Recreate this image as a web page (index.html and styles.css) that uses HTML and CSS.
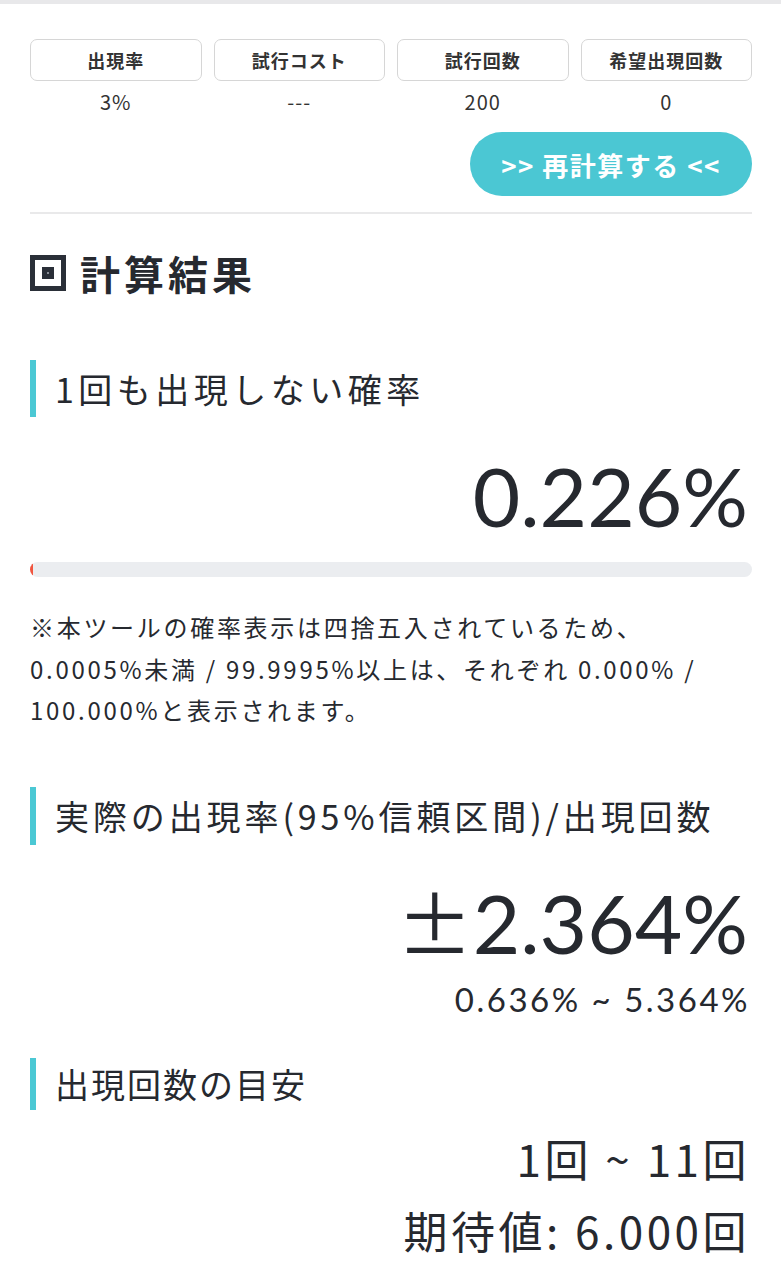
FILE: index.html
```html
<!DOCTYPE html>
<html lang="ja">
<head>
<meta charset="utf-8">
<link rel="stylesheet" href="styles.css">
</head>
<body>
<div class="topline"></div>
<main class="wrap">
  <div class="params">
    <div class="param"><div class="plabel">出現率</div><div class="pval">3%</div></div>
    <div class="param"><div class="plabel">試行コスト</div><div class="pval">---</div></div>
    <div class="param"><div class="plabel">試行回数</div><div class="pval">200</div></div>
    <div class="param"><div class="plabel">希望出現回数</div><div class="pval">0</div></div>
  </div>
  <div class="btnrow"><button class="recalc">&gt;&gt; 再計算する &lt;&lt;</button></div>
  <hr class="sep">
  <h2 class="title"><svg class="ticon" viewBox="0 0 36 36" width="36" height="36"><rect x="2.5" y="2.5" width="31" height="31" fill="none" stroke="#2a2f38" stroke-width="5"/><rect x="12" y="12" width="12" height="12" fill="#2a2f38"/><rect x="17" y="17" width="2" height="2" fill="#8a8f98"/></svg><span>計算結果</span></h2>

  <h3 class="sub s1">1回も出現しない確率</h3>
  <div class="big v1">0.226%</div>
  <div class="bar"><div class="fill" style="width:0.226%"></div></div>
  <p class="note">※本ツールの確率表示は四捨五入されているため、<br>0.0005%未満 / 99.9995%以上は、それぞれ 0.000% / <br>100.000%と表示されます。</p>

  <h3 class="sub s2">実際の出現率(95%信頼区間)/出現回数</h3>
  <div class="big v2"><span class="pm">±</span>2.364%</div>
  <div class="range">0.636% ~ 5.364%</div>

  <h3 class="sub s3">出現回数の目安</h3>
  <div class="mid m1">1回 ~ 11回</div>
  <div class="mid m2">期待値: 6.000回</div>
</main>
</body>
</html>
```
FILE: styles.css
```css
* { box-sizing: border-box; }
html, body { margin: 0; padding: 0; background: #fff; }
body {
  font-family: "Noto Sans CJK JP", "Noto Sans", sans-serif;
  color: #26292f;
  width: 781px;
}
.topline { height: 4px; background: #e8e8ea; }
.wrap { padding: 35px 29px 0 30px; }
.params {
  display: grid;
  grid-template-columns: repeat(4, 1fr);
  column-gap: 12px;
}
.param { display: flex; flex-direction: column; align-items: stretch; }
.plabel {
  height: 42px;
  border: 1.5px solid #d6d6d6;
  border-radius: 7px;
  display: flex; align-items: center; justify-content: center;
  font-size: 18px; font-weight: 700; color: #333;
  letter-spacing: 1px;
}
.pval {
  text-align: center;
  font-size: 20px; color: #333;
  height: 42px; line-height: 42px;
  letter-spacing: 1px;
}
.btnrow { display: flex; justify-content: flex-end; margin-top: 9px; }
.recalc {
  width: 282px; height: 64px;
  border: none; border-radius: 32px;
  background: #4bc7d3; color: #fff;
  font-family: inherit; font-size: 26px; font-weight: 700;
  letter-spacing: 1.5px;
}
.sep { border: none; height: 2px; background: #e9e9ea; margin: 16px 0 0 0; }
.title {
  display: flex; align-items: center; gap: 14px;
  margin: 37px 0 0 0;
  font-size: 40px; font-weight: 700; line-height: 44px;
  letter-spacing: 4px;
  color: #26292f;
}
.ticon { display: block; flex: none; }
.sub {
  margin: 0;
  border-left: 6px solid #4bc8d4;
  padding-left: 19px;
  font-weight: 400;
  font-size: 34px;
  line-height: 57px;
  color: #26292f;
}
.s1 { margin-top: 65px; letter-spacing: 4.5px; }
.big {
  text-align: right;
  font-family: Lato, "Noto Sans CJK JP", sans-serif;
  font-size: 82px;
  line-height: 100px;
  padding-right: 4px;
  font-weight: 400;
  letter-spacing: 0;
}
.pm {
  font-family: "Noto Sans CJK JP", sans-serif;
  font-size: 76px;
  line-height: 1;
  letter-spacing: 0;
}
.v1 { margin-top: 28px; margin-bottom: 4px; }
.bar {
  height: 15px; margin-top: 17px;
  background: #ebedf0; border-radius: 8px; overflow: hidden;
}
.fill { height: 100%; background: #f1553f; border-radius: 8px; min-width: 3px; }
.note {
  margin: 29px 0 0 0;
  font-size: 24px; line-height: 41.5px; color: #26292f;
  letter-spacing: 2.7px;
}
.s2 { margin-top: 56px; letter-spacing: 3.9px; line-height: 58px; }
.v2 { margin-top: 27px; }
.range {
  text-align: right;
  font-family: Lato, "Noto Sans CJK JP", sans-serif;
  font-size: 33px; line-height: 44px;
  padding-right: 2px; margin-top: 5px;
  letter-spacing: 2.5px;
}
.s3 { margin-top: 37px; line-height: 52px; letter-spacing: 2px; }
.mid {
  text-align: right; font-size: 44px; line-height: 72px;
  padding-right: 2px; letter-spacing: 3.5px;
}
.m1 { margin-top: 12px; }
```
